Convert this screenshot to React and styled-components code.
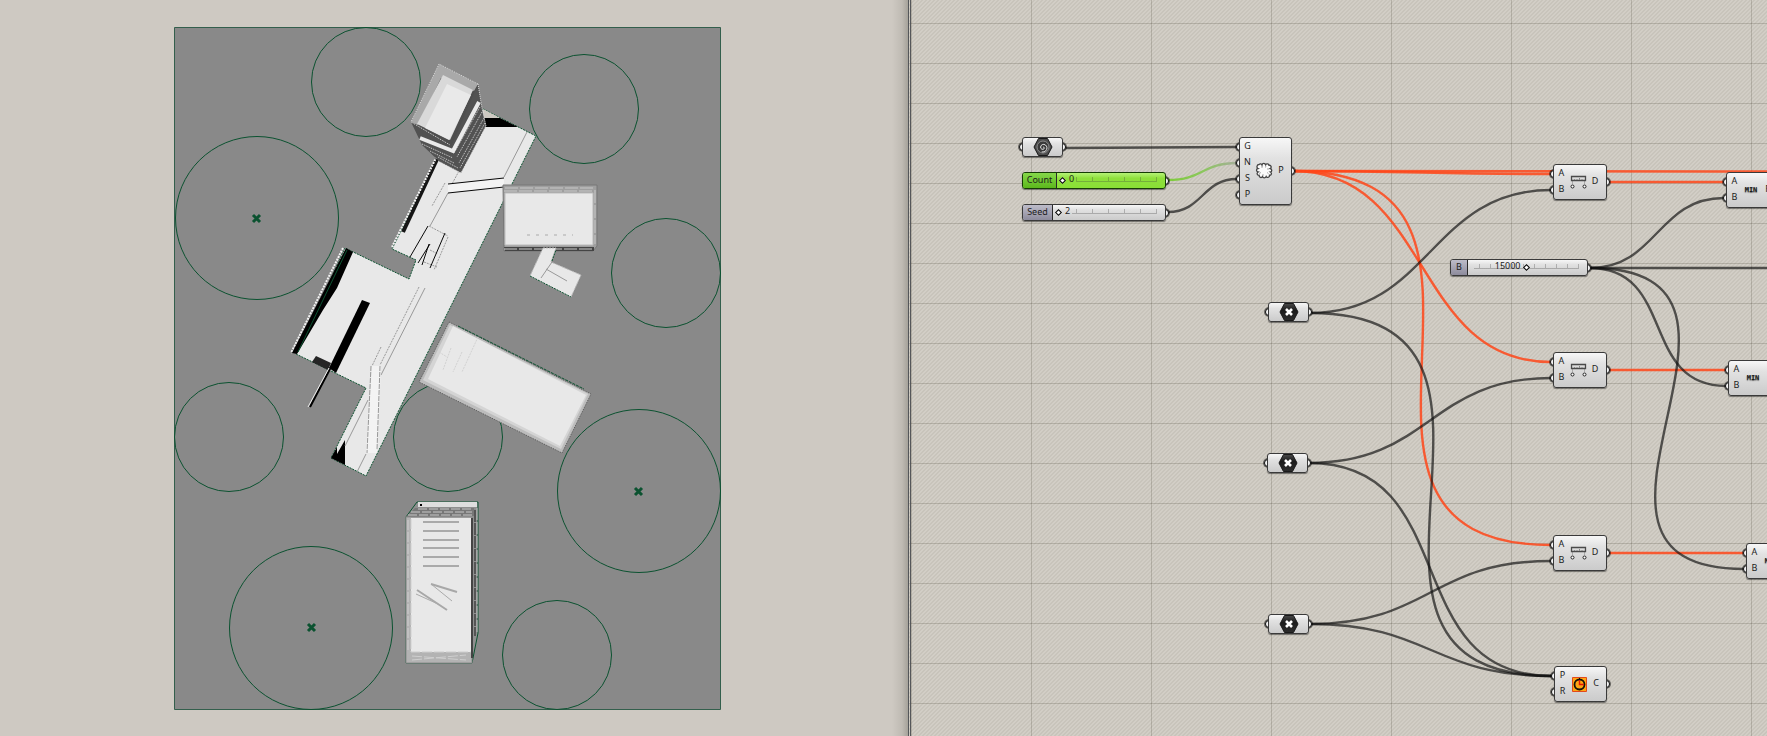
import React from "react";
import styled, { createGlobalStyle } from "styled-components";

const GlobalStyle = createGlobalStyle`
  * { box-sizing: border-box; }
  body {
    margin: 0;
    background: #cdc8c1;
    font-family: "Noto Sans", "Open Sans", sans-serif;
    font-size: 9px;
    line-height: 16px;
    color: #1c1c1c;
  }
`;

const Workspace = styled.main`
  display: grid;
  grid-template-columns: minmax(0, 908fr) minmax(0, 859fr);
  min-height: 100vh;
`;

const Viewport = styled.section`
  display: flex;
  justify-content: center;
  align-items: flex-start;
  padding: 27px 14px 26px 0;
  background:
    linear-gradient(to left, rgba(60, 60, 50, 0.28), rgba(60, 60, 50, 0.1) 6px, transparent 16px),
    #cec9c2;
`;

const SitePlan = styled.svg`
  display: block;
  width: 100%;
  max-width: 547px;
`;

const Canvas = styled.section`
  position: relative;
  overflow: hidden;
  border-left: 3px double #55575a;
  background:
    repeating-linear-gradient(to right, rgba(60, 55, 40, 0.2) 0 1px, transparent 1px 120px),
    repeating-linear-gradient(to bottom, rgba(60, 55, 40, 0.2) 0 1px, transparent 1px 40px) 0 -17px / 100% 2000px,
    linear-gradient(135deg, #d2cec6 25%, #c8c4bb 25% 50%, #d2cec6 50% 75%, #c8c4bb 75%) 0 0 / 4px 4px;
`;

const Wires = styled.svg`
  position: absolute;
  inset: 0;
  width: 100%;
  height: 100%;
  fill: none;
`;

const Node = styled.div`
  position: absolute;
  left: ${(p) => p.$x}px;
  top: ${(p) => p.$y}px;
  width: ${(p) => p.$w}px;
  height: ${(p) => p.$h}px;
`;

const Port = styled.i`
  position: absolute;
  top: ${(p) => p.$y - 4}px;
  ${(p) => (p.$out ? "right: -3px;" : "left: -3px;")}
  width: 8px;
  height: 8px;
  border: 1px solid #0a0a0a;
  border-radius: 50%;
  background: #fff;
  box-shadow: 0 0 0 1px rgba(0, 0, 0, 0.5);
`;

const Body = styled.div`
  position: relative;
  display: flex;
  align-items: ${(p) => (p.$center ? "center" : "stretch")};
  justify-content: ${(p) => (p.$center ? "center" : "flex-start")};
  height: 100%;
  border: 1px solid ${(p) => (p.$green ? "#153d04" : "#3a3a3a")};
  border-radius: 3px;
  overflow: hidden;
  background: ${(p) =>
    p.$green
      ? "linear-gradient(#b5f377, #8fe03c 35%, #8ae036)"
      : "linear-gradient(#f7f7f7, #e2e2e2 30%, #cbcbcb)"};
  box-shadow: 0 1px 1px rgba(0, 0, 0, 0.45);
`;

const Inputs = styled.div`
  width: 15px;
  text-align: center;
`;

const InputName = styled.div`
  height: 16px;
`;

const IconCell = styled.div`
  display: flex;
  align-items: center;
  justify-content: center;
  width: 18px;
`;

const OutputName = styled.div`
  display: flex;
  align-items: center;
  justify-content: center;
  width: 16px;
  padding-bottom: 2px;
`;

const MinText = styled.strong`
  font-family: "DejaVu Sans Mono", "Liberation Mono", monospace;
  font-size: 7px;
  font-weight: 700;
  text-shadow: 0 1px 1px rgba(0, 0, 0, 0.5);
`;

const SliderLabel = styled.label`
  flex: none;
  width: ${(p) => p.$w}px;
  line-height: 13px;
  text-align: center;
  border-right: 1px solid #2a2a2a;
  background: ${(p) =>
    p.$green ? "linear-gradient(#86d84a, #5cb81c)" : "linear-gradient(#bdbcc9, #8d8b9c)"};
`;

const SliderTrack = styled.div`
  position: relative;
  flex: 1;
  margin: 0 5px 0 3px;
`;

const Range = styled.input`
  display: block;
  appearance: none;
  width: 100%;
  height: 15px;
  margin: 0;
  background:
    linear-gradient(rgba(60, 60, 60, 0.3), rgba(60, 60, 60, 0.3)) 100% 8px / calc(100% - ${(p) => p.$inset}px) 1px no-repeat,
    repeating-linear-gradient(to left, rgba(60, 60, 60, 0.3) 0 1px, transparent 1px ${(p) => p.$tick}px)
      100% 4px / calc(100% - ${(p) => p.$inset}px) 4px no-repeat;
  background-origin: content-box;
  padding-right: 3px;
  &::-webkit-slider-runnable-track {
    margin-right: -3px;
  }
  &::-webkit-slider-thumb {
    appearance: none;
    width: 5px;
    height: 5px;
    border: 1px solid #000;
    background: #fff;
    transform: rotate(45deg);
  }
`;

const Value = styled.output`
  position: absolute;
  top: 0;
  line-height: 12px;
  ${(p) => (p.$before ? "right: calc(50% + 6px);" : "left: 9px;")}
  pointer-events: none;
`;

const wirePath = ([x1, y1, x2, y2]) => {
  const h = Math.max((x2 - x1) / 2, Math.abs(y2 - y1) * 0.73);
  return `M${x1} ${y1}C${x1 + h} ${y1} ${x2 - h} ${y2} ${x2} ${y2}`;
};

const orangeWires = [
  [382, 171, 640, 174],
  [382, 171, 1240, 172],
  [382, 171, 640, 362],
  [382, 171, 640, 545],
  [698, 182, 813, 182],
  [698, 370, 815, 370],
  [698, 553, 833, 553],
];

const grayWires = [
  [154, 148, 326, 147],
  [257, 212, 326, 179],
  [399, 313, 640, 190],
  [399, 313, 641, 676],
  [398, 463, 640, 378],
  [398, 463, 641, 676],
  [399, 624, 640, 561],
  [399, 624, 641, 676],
  [679, 268, 813, 198],
  [679, 268, 1240, 268],
  [679, 268, 815, 386],
  [679, 268, 833, 569],
];

function Hexagon({ spiral }) {
  return (
    <svg width="20" height="18" viewBox="0 0 20 18" aria-hidden="true">
      <defs>
        <linearGradient id="hex" x1="0" y1="0" x2="0" y2="1">
          <stop offset="0" stopColor="#4a4a4a" />
          <stop offset="0.4" stopColor="#1b1b1b" />
          <stop offset="1" stopColor="#2c2c2c" />
        </linearGradient>
      </defs>
      <path d="M5.500 .5h9L19 9l-4.500 8.500h-9L1 9z" fill={spiral ? "#4d4d4d" : "url(#hex)"} stroke="#1a1a1a" />
      {spiral ? (
        <g fill="none">
          <circle cx="10" cy="9" r="6" fill="#3a3a3a" stroke="#8a8a8a" />
          <path
            d="M10 9.500c.8-.9 1.900.3 1 1.300-1.200 1.200-3.600.3-3.400-1.800.2-2.300 2.800-3.300 4.700-2.100 2 1.300 2.200 4.200.5 5.900-1.100 1-2.600 1.400-4 1"
            stroke="#e6e6e6"
          />
        </g>
      ) : (
        <path d="M7 6l6 6M13 6l-6 6" stroke="#fff" strokeWidth="2.600" />
      )}
    </svg>
  );
}

const DistanceIcon = () => (
  <svg width="17" height="14" viewBox="0 0 17 14" fill="none" aria-hidden="true">
    <path d="M2.500 6v3M14.500 6v3" stroke="#aaa" />
    <path d="M1.500 1.500h14v4h-14z" fill="#dcdcdc" stroke="#4a4a4a" strokeWidth="1.300" />
    <path d="M4.500 5V4M7 5V4M9.500 5V3M12 5V4" stroke="#888" />
    <circle cx="2.500" cy="11.500" r="1.500" fill="#fff" stroke="#222" />
    <circle cx="14.500" cy="11.500" r="1.500" fill="#fff" stroke="#222" />
  </svg>
);

const PopulateIcon = () => (
  <svg width="18" height="18" viewBox="0 0 18 18" aria-hidden="true">
    <path
      d="M4 2.500c1-1 2.500-.8 3 .5.500-2 3-2 3.500-.2.800-1.500 3.200-1.300 3.500.5 2.200-.3 3 2.200 1.200 3.200 2 .5 2 3.200.2 3.500 1.800 1 1 3.500-.9 3.200.3 2-2.300 3-3.300 1.300-.8 1.800-3.200 1.800-3.700 0-1 1.700-3.700 1-3.300-1.200-2.200.2-2.800-2.300-1-3.300C1 9.500 1 6.800 3 6.500 1.200 5.500 2 2.500 4 2.500z"
      fill="#fbfbfb"
      stroke="#454545"
      strokeWidth="1.300"
    />
    <path d="M7 4v2M11 3.500l-.5 2M14 7h-2M13.500 11.500l-1.500-1M8 14v-2M4 11.500l2-1" stroke="#aaa" />
  </svg>
);

const CircleIcon = () => (
  <svg width="15" height="15" viewBox="0 0 15 15" fill="none" aria-hidden="true">
    <path d="M.5 .5h14v14H.5z" fill="#ffa512" stroke="#e2491c" />
    <circle cx="7.500" cy="7.500" r="5" stroke="#17120a" strokeWidth="1.800" />
    <path d="M7.500 3v4.500H12" stroke="#e11808" strokeWidth="1.400" />
    <path d="M7.500 1v2" stroke="#111" />
  </svg>
);

function Component({ x, y, w = 54, h = 36, inputs, output, icon }) {
  return (
    <Node $x={x} $y={y} $w={w} $h={h}>
      {inputs.map((name, i) => (
        <Port key={name} $y={10 + i * 16} />
      ))}
      <Port $out $y={h / 2} />
      <Body>
        <Inputs>
          {inputs.map((name) => (
            <InputName key={name}>{name}</InputName>
          ))}
        </Inputs>
        <IconCell>{icon}</IconCell>
        <OutputName>{output}</OutputName>
      </Body>
    </Node>
  );
}

function Param({ x, y, spiral }) {
  return (
    <Node $x={x} $y={y} $w={41} $h={20}>
      <Port $y={10} />
      <Port $out $y={10} />
      <Body $center>
        <Hexagon spiral={spiral} />
      </Body>
    </Node>
  );
}

function Slider({ id, name, x, y, w, labelWidth, min, max, value, tick, green, before }) {
  return (
    <Node $x={x} $y={y} $w={w} $h={17}>
      <Port $out $y={9} />
      <Body $green={green}>
        <SliderLabel htmlFor={id} $w={labelWidth} $green={green}>
          {name}
        </SliderLabel>
        <SliderTrack>
          <Range
            id={id}
            type="range"
            min={min}
            max={max}
            defaultValue={value}
            $tick={tick}
            $inset={before ? 3 : 16}
          />
          <Value htmlFor={id} $before={before}>
            {value}
          </Value>
        </SliderTrack>
      </Body>
    </Node>
  );
}

const trees = [
  [366, 82, 55],
  [584, 109, 55],
  [257, 218, 82],
  [666, 273, 55],
  [229, 437, 55],
  [448, 437, 55],
  [639, 491, 82],
  [311, 628, 82],
  [557, 655, 55],
];

const marks = [
  [256, 218],
  [638, 491],
  [311, 627],
];

const GREEN = "#0b5230";

function Tower() {
  return (
    <g>
      <path d="M478 83L482 107 486 125 461 172 440 161 422 144 411 121z" fill="#525252" />
      <path d="M480 106L454 152M482 111L457 156M484 117L459 162M485 122L460 167M422 143L453 157M430 150L454 162M438 156L458 167" stroke="#d8d8d8" strokeDasharray="1 1" fill="none" />
      <path d="M420 137L453 150 479 101" stroke="#eaeaea" strokeWidth="4" fill="none" />
      <path d="M439 63L478 83 451 146 411 121z" fill="#4e4e4e" />
      <path d="M439 63L478 83 474 90 441 77 418 124 411 121z" fill="#a9a9a9" />
      <path d="M443 74L473 89 450 139 417 123z" fill="#d9d9d9" />
      <path d="M447 83L471 94 449 139 425 127z" fill="#e9e9e9" />
      <path d="M478 83L439 63 411 121 450 144M478 83L482 107 486 125 461 172 440 161" fill="none" stroke="#e0e0e0" strokeDasharray="1 1" />
    </g>
  );
}

function MainBuilding() {
  return (
    <g>
      <path d="M483 109L536 136 366 476 331 458 366 388 296 354 345 248 409 279 416 260 392 249 440 153 422 144z" fill="#e8e8e8" stroke={GREEN} strokeDasharray="2 1" />
      <path d="M483 109L500 118H484z" fill="#cec9c2" />
      <path d="M484 118H500L518 127H486z" />
      <path d="M439 155L403 232" stroke="#151515" strokeWidth="4" />
      <path d="M438 154L392 247M343 248L291 353" stroke="#f4f4f4" strokeWidth="2" strokeDasharray="2 1" />
      <path d="M346 248L353 252 337 288 323 310 297 354 292 353z" />
      <path d="M347 250L298 352" stroke={GREEN} />
      <path d="M362 300L370 303 336 373 329 368z" />
      <path d="M316 356L331 363 328 370 312 362z" fill="#252525" />
      <path d="M331 367L310 407" stroke="#000" strokeWidth="2" />
      <path d="M329 368L308 407" stroke="#eee" />
      <path d="M331 458L337 447V454L345 440V465z" />
      <g fill="none" stroke="#999">
        <path d="M527 132L504 177M448 193L430 226M425 288L381 375M368 400L345 446M366 454L357 472" />
        <path d="M445 183L432 206M459 171L452 184M419 287L380 365M381 347L372 366M448 237L434 270M429 226L448 236M424 262L437 267M430 250L438 254" strokeDasharray="2 1" />
      </g>
      <path d="M448 184L504 178V187L448 193zM372 366H381L377 453H366z" fill="#f3f3f3" />
      <path d="M371 366L367 453M380 366L377 450" stroke="#999" strokeDasharray="5 1" />
      <path d="M448 184L504 178M448 193L504 187M428 226L410 257M445 233L430 268M430 244L418 263M429 244L422 265" stroke="#080808" fill="none" />
    </g>
  );
}

function Pavilions() {
  return (
    <g>
      <path d="M503 185H597V246L593 251H504z" fill="#9f9f9f" stroke="#777" />
      <path d="M504 247H594V251H505z" fill="#444" />
      <path d="M505 188H595M504 191H594M504 249H593M595 190V244" stroke="#c8c8c8" strokeDasharray="13 2" />
      <path d="M505 193H593V245H505z" fill="#e8e8e8" stroke="#bbb" />
      <path d="M527 235H573" stroke="#aaa" strokeDasharray="3 6" />
      <path d="M543 248H556L551 262 581 275 571 297 530 276z" fill="#e8e8e8" stroke="#bbb" strokeDasharray="2 1" />
      <path d="M530 276L571 297M552 261L556 250" stroke={GREEN} strokeDasharray="2 1" />
      <path d="M546 269L567 281M552 262L541 278" stroke="#999" />

      <path d="M449 322L591 394 562 453 419 382z" fill="#bcbcbc" stroke="#555" strokeDasharray="1 1" />
      <path d="M450 325L588 394 561 449 423 380z" fill="#d4d4d4" />
      <path d="M453 326L586 395 560 446 428 379z" fill="#e8e8e8" />
      <path d="M458 326L584 389" stroke={GREEN} strokeDasharray="3 1" />
      <path d="M478 337L462 372M462 352L453 372M451 348L443 370M439 352L447 357" stroke="#d2d2d2" strokeDasharray="2 1" />
    </g>
  );
}

function Slab() {
  return (
    <g fill="none">
      <path d="M417 502H478V633L472 663H406V517z" fill="#8f8f8f" stroke={GREEN} />
      <path d="M418 502H477V507H418z" fill="#dedede" />
      <path d="M406 517L415 508H474V516z" fill="#777" />
      <path d="M411 512H472M408 515H472M418 509H472" stroke="#c8c8c8" strokeDasharray="9 2" />
      <path d="M420 504h2v2h-2z" fill="#000" />
      <path d="M475 510V636" stroke="#555" strokeWidth="2" strokeDasharray="12 1" />
      <path d="M477 508V632" stroke="#bbb" strokeDasharray="12 2" />
      <path d="M406 517H472V663H406z" fill="#b3b3b3" stroke="#8a8a8a" />
      <path d="M411 518H472V652H411z" fill="#e8e8e8" />
      <path d="M472 518V658" stroke="#444" strokeWidth="2" />
      <path d="M408 520V650M411 519V652H471M412 656L466 660M412 660L466 655" stroke="#cfcfcf" strokeDasharray="10 2" />
      <path d="M423 522H459M423 531H459M423 540H459M423 548H459M423 557H459M423 566H459" stroke="#aaa" strokeWidth="2" />
      <path d="M431 584L457 592M417 590L447 610" stroke="#a8a8a8" strokeWidth="2" />
      <path d="M416 594L438 604M431 584L452 601" stroke="#aaa" />
    </g>
  );
}

export default function App() {
  return (
    <>
      <GlobalStyle />
      <Workspace>
        <Viewport>
          <SitePlan viewBox="174 27 547 683" role="img" aria-label="Site plan">
            <path d="M174.500 27.500H720.500V709.500H174.500z" fill="#898989" stroke="#335f4c" />
            <g fill="none" stroke={GREEN}>
              {trees.map(([cx, cy, r]) => (
                <circle key={`${cx}-${cy}`} cx={cx} cy={cy} r={r - 0.5} />
              ))}
            </g>
            <path
              d={marks.map(([x, y]) => `M${x - 3} ${y - 3}l7 7M${x + 4} ${y - 3}l-7 7`).join("")}
              stroke={GREEN}
              strokeWidth="3"
            />
            <MainBuilding />
            <g transform="translate(0 1)">
              <Tower />
            </g>
            <Pavilions />
            <Slab />
          </SitePlan>
        </Viewport>
        <Canvas>
          <Wires aria-hidden="true">
            <defs>
              <linearGradient id="fade" x1="0" y1="0" x2="1" y2="0">
                <stop offset="0" stopColor="#7fcb3c" />
                <stop offset="0.500" stopColor="#8bc75c" />
                <stop offset="1" stopColor="#a5ae9a" />
              </linearGradient>
            </defs>
            <g stroke="#ff4719" strokeOpacity="0.85" strokeWidth="2.400">
              {orangeWires.map((w) => (
                <path key={w.join()} d={wirePath(w)} />
              ))}
            </g>
            <path d={wirePath([257, 180, 326, 163])} stroke="url(#fade)" strokeWidth="2.400" />
            <g stroke="#111" strokeOpacity="0.67" strokeWidth="2.400">
              {grayWires.map((w) => (
                <path key={w.join()} d={wirePath(w)} />
              ))}
            </g>
          </Wires>

          <Param x={111} y={137} spiral />
          <Slider id="count" name="Count" x={111} y={172} w={144} labelWidth={34} min={0} max={6} value={0} tick={16} green />
          <Slider id="seed" name="Seed" x={111} y={204} w={144} labelWidth={30} min={2} max={10} value={2} tick={16} />
          <Component x={328} y={137} w={53} h={68} inputs={["G", "N", "S", "P"]} output="P" icon={<PopulateIcon />} />

          <Component x={642} y={164} inputs={["A", "B"]} output="D" icon={<DistanceIcon />} />
          <Component x={642} y={352} inputs={["A", "B"]} output="D" icon={<DistanceIcon />} />
          <Component x={642} y={535} inputs={["A", "B"]} output="D" icon={<DistanceIcon />} />

          <Slider id="limit" name="B" x={539} y={259} w={138} labelWidth={17} min={0} max={30000} value={15000} tick={11} before />

          <Component x={815} y={172} inputs={["A", "B"]} output="R" icon={<MinText>MIN</MinText>} />
          <Component x={817} y={360} inputs={["A", "B"]} output="R" icon={<MinText>MIN</MinText>} />
          <Component x={835} y={543} inputs={["A", "B"]} output="R" icon={<MinText>MIN</MinText>} />

          <Param x={357} y={302} />
          <Param x={356} y={453} />
          <Param x={357} y={614} />

          <Component x={643} y={666} w={53} inputs={["P", "R"]} output="C" icon={<CircleIcon />} />
        </Canvas>
      </Workspace>
    </>
  );
}
